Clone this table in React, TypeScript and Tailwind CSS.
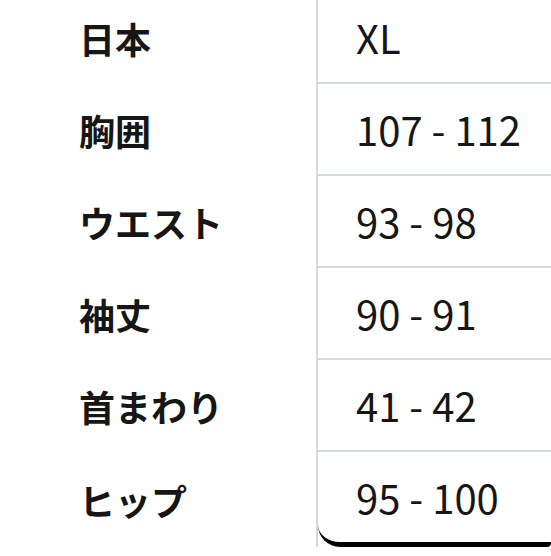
const rows = [
  { label: "日本", value: "XL" },
  { label: "胸囲", value: "107 - 112" },
  { label: "ウエスト", value: "93 - 98" },
  { label: "袖丈", value: "90 - 91" },
  { label: "首まわり", value: "41 - 42" },
  { label: "ヒップ", value: "95 - 100" },
];

export default function App() {
  return (
    <div
      className="w-[551px] h-[556px] overflow-hidden bg-white text-[#161616]"
      style={{ fontFamily: '"Noto Sans CJK JP", "Noto Sans", sans-serif' }}
    >
      <div className="-mt-[8px] flex flex-col">
        {rows.map((r, i) => {
          const last = i === rows.length - 1;
          return (
            <div key={r.label} className="flex">
              {/* label cell */}
              <div className="w-[318px] shrink-0 border-r-2 border-[#d6dbda] flex items-center pl-[79px] text-[36px] font-bold leading-none">
                {r.label}
              </div>
              {/* value cell */}
              <div
                className={
                  last
                    ? "flex-1 h-[95px] flex items-center pl-[38px] text-[40px] leading-none border-b-[5px] border-black rounded-bl-[22px] rounded-br-[4px]"
                    : "flex-1 h-[92px] flex items-center pl-[38px] text-[40px] leading-none border-b-2 border-[#d6dbda]"
                }
              >
                {r.value}
              </div>
            </div>
          );
        })}
      </div>
    </div>
  );
}
